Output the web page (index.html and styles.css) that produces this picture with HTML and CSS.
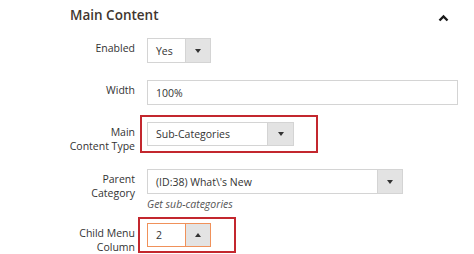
FILE: index.html
```html
<!DOCTYPE html>
<html>
<head>
<meta charset="utf-8">
<link rel="stylesheet" href="styles.css">
</head>
<body>
<section class="panel">
  <header class="panel-head">
    <h2 class="panel-title">Main Content</h2>
    <svg class="chevron" width="11" height="8" viewBox="0 0 11 8"><path d="M1.5 6.5 L5.5 2.5 L9.5 6.5" fill="none" stroke="#1a1a1a" stroke-width="2.4"/></svg>
  </header>
  <div class="form">
    <div class="row r-enabled">
      <div class="label">Enabled</div>
      <div class="control">
        <div class="select w-enabled"><span class="val">Yes</span><span class="btn"><span class="tri-down"></span></span></div>
      </div>
    </div>
    <div class="row r-width">
      <div class="label">Width</div>
      <div class="control">
        <div class="input w-width"><span class="val">100%</span></div>
      </div>
    </div>
    <div class="row r-type">
      <div class="label">Main<br>Content Type</div>
      <div class="control">
        <div class="select w-type mark mark-type"><span class="val">Sub-Categories</span><span class="btn"><span class="tri-down"></span></span></div>
      </div>
    </div>
    <div class="row r-parent">
      <div class="label">Parent<br>Category</div>
      <div class="control">
        <div class="select w-parent"><span class="val">(ID:38) What\'s New</span><span class="btn"><span class="tri-down"></span></span></div>
        <div class="note">Get sub-categories</div>
      </div>
    </div>
    <div class="row r-child">
      <div class="label">Child Menu<br>Column</div>
      <div class="control">
        <div class="select w-child focus mark mark-child"><span class="val">2</span><span class="btn"><span class="tri-up"></span></span></div>
      </div>
    </div>
  </div>
</section>
</body>
</html>
```

FILE: styles.css
```css
html, body {
  margin: 0;
  padding: 0;
  background: #fff;
}
body {
  font-family: "Open Sans", "Noto Sans", sans-serif;
  color: #303030;
  width: 474px;
  height: 254px;
  overflow: hidden;
}
.panel {
  padding: 0 25px 0 70px;
}
.panel-head {
  display: flex;
  align-items: center;
  justify-content: space-between;
  height: 30px;
}
.panel-title {
  margin: 0;
  font-size: 13.5px;
  font-weight: 600;
  color: #41362f;
  line-height: 18px;
}
.chevron {
  display: block;
  position: relative;
  top: 3px;
}
.form {
  margin-left: -70px;
  padding-top: 8px;
}
.row {
  display: grid;
  grid-template-columns: 135px auto;
  column-gap: 12px;
  align-items: start;
}
.r-width, .r-type { margin-top: 17px; }
.r-parent { margin-top: 16px; }
.r-child { margin-top: 12px; }
.label {
  text-align: right;
  font-size: 10.5px;
  line-height: 14px;
  padding-top: 3px;
  color: #333;
}
.control {
  display: flex;
  flex-direction: column;
  align-items: flex-start;
}
.select, .input {
  position: relative;
  display: flex;
  align-items: stretch;
  box-sizing: border-box;
  height: 25px;
  border: 1px solid #d4d4d4;
  background: #fff;
  font-size: 10.5px;
  color: #333;
}
.val {
  flex: 1;
  display: flex;
  align-items: center;
  padding-left: 8px;
  white-space: nowrap;
}
.btn {
  width: 24px;
  background: #e3e3e3;
  border-left: 1px solid #d4d4d4;
  display: flex;
  align-items: center;
  justify-content: center;
}
.tri-down {
  width: 0;
  height: 0;
  border-left: 3.5px solid transparent;
  border-right: 3.5px solid transparent;
  border-top: 4px solid #333;
}
.tri-up {
  width: 0;
  height: 0;
  border-left: 3px solid transparent;
  border-right: 3px solid transparent;
  border-bottom: 4px solid #333;
}
.w-enabled { width: 64px; }
.w-width { width: 311px; }
.w-type { width: 147px; height: 24px; }
.w-type .btn { width: 25px; }
.w-parent { width: 256px; }
.w-child { width: 64px; height: 24px; }
.focus {
  border-color: #f0915a;
}
.focus .btn { border-left-color: #f0915a; }
.mark::after {
  content: "";
  position: absolute;
  border: 2px solid #c3272e;
  pointer-events: none;
}
.mark-type::after {
  left: -8px;
  right: -25px;
  top: -8px;
  bottom: -8px;
}
.mark-child::after {
  left: -10px;
  right: -26px;
  top: -7px;
  bottom: -7px;
}
.note {
  margin-top: 3px;
  font-size: 10.5px;
  line-height: 14px;
  font-style: italic;
  color: #555;
}
```
